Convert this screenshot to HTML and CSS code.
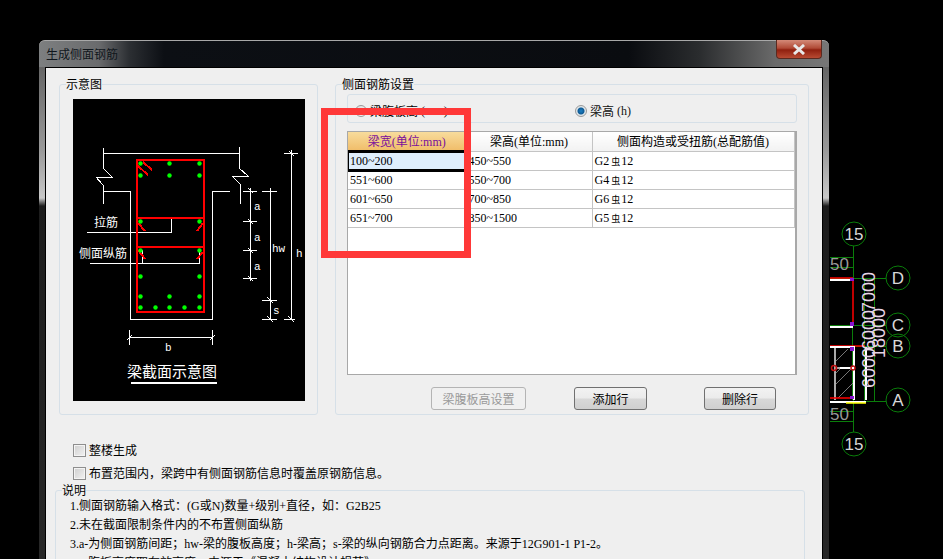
FILE: index.html
```html
<!DOCTYPE html>
<html lang="zh-CN">
<head>
<meta charset="UTF-8" />
<title>生成侧面钢筋</title>
<link rel="stylesheet" href="styles.css">
</head>
<body>

  <!-- CAD drawing behind the dialog -->
  <svg class="cad" width="943" height="559" viewBox="0 0 943 559">
    <g class="cad-green">
      <path d="M853 246V278M853 400V432M830 257H853M830 267H853M830 411H853M830 421H853" />
      <path d="M830 278H886M830 325H886M853 346H886M830 401H886M874 278V401M864 280V401M852 325V400" />
      <circle cx="854" cy="234" r="12" />
      <circle cx="854" cy="444" r="12" />
      <circle cx="898" cy="278" r="12" />
      <circle cx="898" cy="325" r="12" />
      <circle cx="898" cy="346" r="12" />
      <circle cx="898" cy="400" r="12" />
    </g>
    <path class="cad-hatch" d="M835 362L848 349M835 385L853 367M838 398L853 383M835 374L842 367" />
    <path class="cad-grey" d="M835 347V400M835 368H854" />
    <path class="cad-red" d="M830 278H853M853 279V325M830 346H865M830 398H855" />
    <path class="cad-white" d="M830 280H854M830 327H853M854 346V400M866 347V400M830 347H853M830 402H866M854 368H840" />
    <path class="cad-yellow" d="M846 403H866" />
    <g fill="#8a14d0">
      <rect x="850" y="278" width="4" height="3" />
      <rect x="850" y="322" width="4" height="4" />
      <rect x="850" y="347" width="4" height="4" />
      <rect x="850" y="396" width="4" height="3" />
    </g>
    <circle class="cad-node" cx="834" cy="368" r="2.5" />
    <circle class="cad-node" cx="853" cy="368" r="2" />
    <g class="cad-label">
      <text x="854" y="240" text-anchor="middle">15</text>
      <text x="854" y="450" text-anchor="middle">15</text>
      <text x="898" y="284" text-anchor="middle">D</text>
      <text x="898" y="331" text-anchor="middle">C</text>
      <text x="898" y="352" text-anchor="middle">B</text>
      <text x="898" y="406" text-anchor="middle">A</text>
      <text class="cad-dim" x="830" y="270">50</text>
      <text class="cad-dim" x="830" y="420">50</text>
    </g>
    <g class="cad-rotated">
      <text transform="translate(875 312) rotate(-90)">7000</text>
      <text transform="translate(875 350) rotate(-90)">6000</text>
      <text transform="translate(875 388) rotate(-90)">6000</text>
      <text transform="translate(885 358) rotate(-90)">18000</text>
    </g>
  </svg>

  <div class="dialog">
    <div class="titlebar">
      <span class="title">生成侧面钢筋</span>
      <div class="close-btn">
        <svg width="14" height="11" viewBox="0 0 14 11"><path d="M2 1L12 10M12 1L2 10" fill="none" stroke="#e8e8e8" stroke-width="3" /></svg>
      </div>
    </div>

    <div class="client">
      <div class="top-row">

        <!-- 示意图 -->
        <fieldset class="group group-diagram">
          <legend>示意图</legend>
          <svg class="diagram" width="232" height="302" viewBox="73 99 232 302">
            <path class="line" d="M103 148V168L112 177H96L103 185V204M239 147V168L248 176H232L240 184V204M103 153H239" />
            <path class="line" d="M103 191H130V319H212V191H230" />
            <!-- leaders -->
            <path class="line" d="M171 218V232H87M142 250V263H90M199 252V263H142" />
            <!-- a -->
            <path class="line" d="M250 188V281M243 191H257M243 221H257M243 250H257M243 278H257" />
            <path class="line" d="M248 188L253 193M248 219L253 224M248 248L253 253M248 276L253 281" />
            <!-- hw / s / h -->
            <path class="line" d="M270 188V320M262 191H277M262 300H277M262 319H277M267 297L273 303M267 316L273 322" />
            <path class="line" d="M291 150V320M284 153H298M284 319H295M289 151L294 156M288 316L294 322" />
            <!-- b -->
            <path class="line" d="M129 330V345M212 330V345M129 337H212M127 340L132 335M210 340L215 335" />
            <path class="line-bold" d="M131 383H217" />

            <rect class="stirrup" x="137" y="160" width="67" height="152" />
            <path class="stirrup" d="M137 218H204M137 247H204" />
            <path class="stirrup" d="M138 166L148 175M143 162L152 170M138 223L145 231M203 223L197 231M138 250L145 259M203 252L197 259" />

            <g class="dots">
              <circle cx="140.5" cy="163.5" r="2.2" /><circle cx="169.5" cy="163.5" r="2.2" /><circle cx="199.5" cy="163.5" r="2.2" />
              <circle cx="140.5" cy="175.5" r="2.2" /><circle cx="169.5" cy="175.5" r="2.2" /><circle cx="199.5" cy="175.5" r="2.2" />
              <circle cx="140.5" cy="221.5" r="2.2" /><circle cx="199.5" cy="221.5" r="2.2" />
              <circle cx="140.5" cy="250.5" r="2.2" /><circle cx="199.5" cy="250.5" r="2.2" />
              <circle cx="140.5" cy="276.5" r="2.2" /><circle cx="199.5" cy="276.5" r="2.2" />
              <circle cx="140.5" cy="296.5" r="2.2" /><circle cx="169.5" cy="296.5" r="2.2" /><circle cx="199.5" cy="296.5" r="2.2" />
              <circle cx="140.5" cy="307.5" r="2.2" /><circle cx="155.5" cy="307.5" r="2.2" /><circle cx="169.5" cy="307.5" r="2.2" /><circle cx="184.5" cy="307.5" r="2.2" /><circle cx="199.5" cy="307.5" r="2.2" />
            </g>

            <g class="diagram-text">
              <text x="94" y="227">拉筋</text>
              <text x="79" y="258">侧面纵筋</text>
              <text class="diagram-small" x="254" y="210">a</text>
              <text class="diagram-small" x="254" y="241">a</text>
              <text class="diagram-small" x="254" y="270">a</text>
              <text class="diagram-small" x="272" y="252">hw</text>
              <text class="diagram-small" x="273" y="314">s</text>
              <text class="diagram-small" x="296" y="257">h</text>
              <text class="diagram-small" x="165" y="351">b</text>
              <text class="diagram-title" x="127" y="377">梁截面示意图</text>
            </g>
          </svg>
        </fieldset>

        <!-- 侧面钢筋设置 -->
        <fieldset class="group group-settings">
          <legend>侧面钢筋设置</legend>

          <div class="radio-box">
            <label class="radio-item radio-first"><span class="radio"></span>梁腹板高<span class="lat">(mm)</span></label>
            <label class="radio-item radio-second"><span class="radio radio-on"></span>梁高<span class="lat">(h)</span></label>
          </div>

          <div class="table-box">
            <table class="rebar-table">
              <colgroup><col class="col-a"><col class="col-b"><col class="col-c"></colgroup>
              <thead>
                <tr>
                  <th class="th-active">梁宽<span class="lat">(</span>单位<span class="lat">:mm)</span></th>
                  <th>梁高<span class="lat">(</span>单位<span class="lat">:mm)</span></th>
                  <th>侧面构造或受扭筋<span class="lat">(</span>总配筋值<span class="lat">)</span></th>
                </tr>
              </thead>
              <tbody>
                <tr>
                  <td class="td-active"><span class="lat">100~200</span></td>
                  <td><span class="lat">450~550</span></td>
                  <td><span class="lat">G2</span><span class="bar">虫</span><span class="lat">12</span></td>
                </tr>
                <tr>
                  <td><span class="lat">551~600</span></td>
                  <td><span class="lat">550~700</span></td>
                  <td><span class="lat">G4</span><span class="bar">虫</span><span class="lat">12</span></td>
                </tr>
                <tr>
                  <td><span class="lat">601~650</span></td>
                  <td><span class="lat">700~850</span></td>
                  <td><span class="lat">G6</span><span class="bar">虫</span><span class="lat">12</span></td>
                </tr>
                <tr>
                  <td><span class="lat">651~700</span></td>
                  <td><span class="lat">850~1500</span></td>
                  <td><span class="lat">G5</span><span class="bar">虫</span><span class="lat">12</span></td>
                </tr>
              </tbody>
            </table>
          </div>

          <div class="btn-row">
            <button class="btn btn-plate" disabled>梁腹板高设置</button>
            <button class="btn btn-add">添加行</button>
            <button class="btn btn-del">删除行</button>
          </div>
        </fieldset>
      </div>

      <label class="check-row check-first"><span class="check"></span>整楼生成</label>
      <label class="check-row check-second"><span class="check"></span>布置范围内，梁跨中有侧面钢筋信息时覆盖原钢筋信息。</label>

      <!-- 说明 -->
      <fieldset class="group group-notes">
        <legend>说明</legend>
        <p><span class="lat">1.</span>侧面钢筋输入格式：<span class="lat">(G</span>或<span class="lat">N)</span>数量<span class="lat">+</span>级别<span class="lat">+</span>直径，如：<span class="lat">G2B25</span></p>
        <p><span class="lat">2.</span>未在截面限制条件内的不布置侧面纵筋</p>
        <p><span class="lat">3.a-</span>为侧面钢筋间距；<span class="lat">hw-</span>梁的腹板高度；<span class="lat">h-</span>梁高；<span class="lat">s-</span>梁的纵向钢筋合力点距离。来源于<span class="lat">12G901-1 P1-2</span>。</p>
        <p class="note-indent">腹板高度取有效高度，来源于《混凝土结构设计规范》<span class="lat">GB50010-2010 P55</span></p>
      </fieldset>
    </div>

    <!-- red annotation drawn over the screenshot -->
    <div class="annotation"></div>
  </div>

</body>
</html>
```

FILE: styles.css
```css
* {
  box-sizing: border-box;
}

html, body {
  margin: 0;
  height: 559px;
  overflow: hidden;
}

body {
  position: relative;
  background-color: #000;
  color: #000;
  font-family: "Noto Sans CJK SC", "Liberation Sans", sans-serif;
  font-size: 12px;
  line-height: 14px;
}

/* half-width latin runs, about 6px per char like the dialog's bitmap font */
.lat {
  font-family: "Liberation Serif", serif;
  font-size: 12px;
}

/* rebar grade symbol */
.bar {
  margin: 0 1px 0 2px;
  font-size: 9px;
}

/* CAD background */
.cad {
  position: absolute;
  top: 0;
  left: 0;
}

.cad path {
  fill: none;
}

.cad-green {
  fill: none;
  stroke: #0a7d0a;
}

.cad-green path {
  shape-rendering: crispEdges;
}

.cad-hatch { stroke: #777; }
.cad-grey { stroke: #aaa; stroke-width: 2; }
.cad-red { stroke: #f00; stroke-width: 1.5; }
.cad-white { stroke: #fff; stroke-width: 2; }
.cad-yellow { stroke: #ff0; stroke-width: 1.5; }
.cad-node { fill: none; stroke: #c01010; stroke-width: 1.5; }

.cad-label text {
  fill: #d8d8d8;
  font-family: "Liberation Sans", sans-serif;
  font-size: 17px;
}

.cad-label .cad-dim {
  fill: #999;
}

.cad-rotated text {
  fill: #e6d4e6;
  font-family: "Liberation Sans", sans-serif;
  font-size: 18px;
}

/* Dialog window */
.dialog {
  position: absolute;
  top: 40px;
  left: 39px;
  width: 790px;
  height: 600px;
  padding: 0 6px;
  border-radius: 6px 6px 0 0;
  background: linear-gradient(180deg, #555 0, #999 110px, #c8c8c8 158px, #1c1c1c 166px, #2a2a2a 100%);
}

.titlebar {
  display: flex;
  justify-content: space-between;
  align-items: flex-start;
  height: 27px;
  margin: 0 -6px;
  padding-left: 7px;
  border-top: 1px solid #a8a8a8;
  border-radius: 6px 6px 0 0;
  background: linear-gradient(90deg, #7d7f80 0, #6a6b6d 60px, #2c2f33 90px, #0c0f14 125px, #0a0c10 590px, #2a2c2e 660px, #6a6a6a 736px, #777 100%);
}

.title {
  margin-top: 6px;
  color: #10161c;
}

.close-btn {
  display: flex;
  align-items: center;
  justify-content: center;
  width: 46px;
  height: 19px;
  margin: -1px 7px 0 0;
  border: 1px solid #5a2a20;
  border-top: none;
  border-radius: 0 0 4px 4px;
  background: linear-gradient(180deg, #d48a78 0, #b04a36 45%, #90200f 55%, #b84a32 100%);
}

.client {
  height: 573px;
  padding: 16px 0 0;
  border: 1px solid #000;
  background-color: #efefef;
}

.top-row {
  display: flex;
  gap: 17px;
  padding-left: 13px;
}

/* Group boxes */
.group {
  min-width: 0;
  margin: 0;
  padding: 0;
  border: 1px solid #d6e0e8;
  border-radius: 3px;
}

.group legend {
  padding: 0;
  line-height: 14px;
}

.group-diagram {
  width: 259px;
  height: 338px;
  margin-top: -7px;
  padding: 8px 0 0 13px;
}

.group-diagram legend {
  margin-left: -7px;
}

.group-settings {
  width: 474px;
  height: 338px;
  margin-top: -7px;
  padding: 3px 0 0 11px;
}

.group-settings legend {
  margin-left: -5px;
}

.diagram {
  display: block;
  background-color: #000;
}

.line { fill: none; stroke: #fff; stroke-width: 1; shape-rendering: crispEdges; }
.line-bold { fill: none; stroke: #fff; stroke-width: 2; shape-rendering: crispEdges; }
.stirrup { fill: none; stroke: #f00; stroke-width: 2; shape-rendering: crispEdges; }
.dots circle { fill: #0f0; }

.diagram-text text {
  fill: #fff;
  font-size: 12px;
}

.diagram-text .diagram-small {
  font-family: "Liberation Mono", monospace;
  font-size: 11px;
}

.diagram-text .diagram-title {
  font-size: 15px;
}

/* Radios */
.radio-box {
  display: flex;
  align-items: center;
  width: 450px;
  height: 29px;
  padding-top: 4px;
  border: 1px solid #d6e0e8;
  border-radius: 3px;
}

.radio-item {
  display: flex;
  align-items: center;
  gap: 3px;
}

.radio-first {
  margin-left: 7px;
  width: 220px;
}

.radio-second {
  color: #111;
}

.radio {
  width: 12px;
  height: 12px;
  border: 1px solid #9a9a9a;
  border-radius: 50%;
  background: linear-gradient(135deg, #ddd, #fafafa);
}

.radio-on {
  background: radial-gradient(circle, #1a7fc4 0, #0f5a94 3px, #dfe6ea 4px);
}

/* Table */
.table-box {
  width: 450px;
  height: 244px;
  margin-top: 8px;
  border: 1px solid #a8a8a8;
  border-right-width: 2px;
  background-color: #fff;
}

.rebar-table {
  width: 446px;
  border-collapse: collapse;
  table-layout: fixed;
}

.col-a { width: 118px; }
.col-b { width: 126px; }
.col-c { width: 202px; }

.rebar-table th {
  height: 19px;
  padding: 0;
  border-right: 1px solid #c4c4c4;
  border-bottom: 1px solid #c4c4c4;
  background: linear-gradient(180deg, #fff, #f2f2f2);
  font-weight: normal;
  text-align: center;
}

.rebar-table th.th-active {
  background: linear-gradient(180deg, #f8dc9c, #f0bc68);
  color: #7a0f9c;
}

.rebar-table td {
  position: relative;
  height: 19px;
  padding: 0 0 0 2px;
  border-right: 1px solid #c4c4c4;
  border-bottom: 1px solid #c4c4c4;
}

.rebar-table td.td-active {
  background-color: #dfeefc;
}

/* selected cell frame sits over the grid lines */
.td-active::after {
  content: "";
  position: absolute;
  top: -2px;
  right: 0;
  bottom: -2px;
  left: 0;
  border-top: 3px solid #000;
  border-bottom: 3px solid #000;
  border-left: 1px solid #000;
}

/* Buttons */
.btn-row {
  display: flex;
  gap: 48px;
  margin-top: 12px;
  padding-left: 84px;
}

.btn {
  height: 23px;
  padding: 0;
  border: 1px solid #707070;
  border-radius: 3px;
  background: linear-gradient(180deg, #f2f2f2 0, #ebebeb 48%, #d8d8d8 52%, #cfcfcf 100%);
  color: #000;
  font-family: inherit;
  font-size: 12px;
}

.btn-plate {
  width: 95px;
  border-color: #b4b4b4;
  background: #f0f0f0;
  color: #9a9a9a;
}

.btn-add { width: 73px; }
.btn-del { width: 72px; margin-left: 9px; }

/* Checkboxes */
.check-row {
  display: flex;
  align-items: center;
  gap: 3px;
  height: 14px;
  padding-left: 27px;
}

.check-first { margin-top: 28px; }
.check-second { margin-top: 9px; }

.check {
  width: 13px;
  height: 13px;
  border: 1px solid #8e8e8e;
  box-shadow: inset 0 0 0 1px #f4f4f4;
  background: linear-gradient(135deg, #cfcfcf, #f2f2f2);
}

/* 说明 */
.group-notes {
  width: 750px;
  height: 120px;
  margin: 3px 0 0 9px;
  padding-left: 14px;
}

.group-notes legend {
  margin-left: -8px;
}

.group-notes p {
  margin: 0;
  height: 19px;
  line-height: 19px;
  white-space: nowrap;
}

.group-notes p:first-of-type {
  margin-top: -2px;
}

.group-notes .note-indent {
  padding-left: 18px;
}

/* Red annotation */
.annotation {
  position: absolute;
  top: 68px;
  left: 282px;
  width: 150px;
  height: 150px;
  border: 7px solid #ff3838;
}
```
